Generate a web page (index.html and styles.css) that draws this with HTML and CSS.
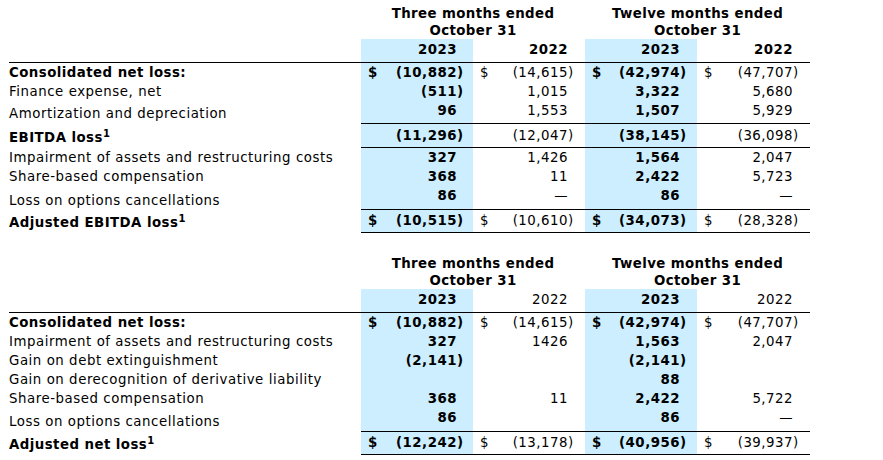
FILE: index.html
```html
<!DOCTYPE html>
<html lang="en">
<head>
<meta charset="utf-8">
<title>Reconciliation</title>
<link rel="stylesheet" href="styles.css">
</head>
<body>
<div class="page">
<table class="fin">
  <colgroup>
    <col class="c-label">
    <col class="c-d"><col class="c-n1"><col class="c-p1">
    <col class="c-d"><col class="c-n"><col class="c-p">
    <col class="c-d"><col class="c-n"><col class="c-p">
    <col class="c-d"><col class="c-n4"><col class="c-p">
  </colgroup>
  <thead>
    <tr class="r-period">
      <th></th>
      <th colspan="6" class="period">Three months ended<br>October 31</th>
      <th colspan="6" class="period">Twelve months ended<br>October 31</th>
    </tr>
    <tr class="r-year">
      <th></th>
      <th colspan="2" class="yr hl">2023</th><th class="hl"></th>
      <th colspan="2" class="yr b">2022</th><th></th>
      <th colspan="2" class="yr hl">2023</th><th class="hl"></th>
      <th colspan="2" class="yr b">2022</th><th></th>
    </tr>
  </thead>
  <tbody>
    <tr>
      <td class="lbl b">Consolidated net loss:</td>
      <td class="d hl">$</td><td class="n hl">(10,882</td><td class="p hl">)</td>
      <td class="d">$</td><td class="n">(14,615</td><td class="p">)</td>
      <td class="d hl">$</td><td class="n hl">(42,974</td><td class="p hl">)</td>
      <td class="d">$</td><td class="n">(47,707</td><td class="p">)</td>
    </tr>
    <tr>
      <td class="lbl">Finance expense, net</td>
      <td class="d hl"></td><td class="n hl">(511</td><td class="p hl">)</td>
      <td class="d"></td><td class="n">1,015</td><td class="p"></td>
      <td class="d hl"></td><td class="n hl">3,322</td><td class="p hl"></td>
      <td class="d"></td><td class="n">5,680</td><td class="p"></td>
    </tr>
    <tr class="rule h23 lo5">
      <td class="lbl">Amortization and depreciation</td>
      <td class="d hl"></td><td class="n hl">96</td><td class="p hl"></td>
      <td class="d"></td><td class="n">1,553</td><td class="p"></td>
      <td class="d hl"></td><td class="n hl">1,507</td><td class="p hl"></td>
      <td class="d"></td><td class="n">5,929</td><td class="p"></td>
    </tr>
    <tr class="rule h24 hi4 lo6">
      <td class="lbl b">EBITDA loss<sup>1</sup></td>
      <td class="d hl"></td><td class="n hl">(11,296</td><td class="p hl">)</td>
      <td class="d"></td><td class="n">(12,047</td><td class="p">)</td>
      <td class="d hl"></td><td class="n hl">(38,145</td><td class="p hl">)</td>
      <td class="d"></td><td class="n">(36,098</td><td class="p">)</td>
    </tr>
    <tr>
      <td class="lbl">Impairment of assets and restructuring costs</td>
      <td class="d hl"></td><td class="n hl">327</td><td class="p hl"></td>
      <td class="d"></td><td class="n">1,426</td><td class="p"></td>
      <td class="d hl"></td><td class="n hl">1,564</td><td class="p hl"></td>
      <td class="d"></td><td class="n">2,047</td><td class="p"></td>
    </tr>
    <tr>
      <td class="lbl">Share-based compensation</td>
      <td class="d hl"></td><td class="n hl">368</td><td class="p hl"></td>
      <td class="d"></td><td class="n">11</td><td class="p"></td>
      <td class="d hl"></td><td class="n hl">2,422</td><td class="p hl"></td>
      <td class="d"></td><td class="n">5,723</td><td class="p"></td>
    </tr>
    <tr class="rule h24 lo7">
      <td class="lbl">Loss on options cancellations</td>
      <td class="d hl"></td><td class="n hl">86</td><td class="p hl"></td>
      <td class="d"></td><td class="n">&mdash;</td><td class="p"></td>
      <td class="d hl"></td><td class="n hl">86</td><td class="p hl"></td>
      <td class="d"></td><td class="n">&mdash;</td><td class="p"></td>
    </tr>
    <tr class="rule h23 hi3 lo5">
      <td class="lbl b">Adjusted EBITDA loss<sup>1</sup></td>
      <td class="d hl">$</td><td class="n hl">(10,515</td><td class="p hl">)</td>
      <td class="d">$</td><td class="n">(10,610</td><td class="p">)</td>
      <td class="d hl">$</td><td class="n hl">(34,073</td><td class="p hl">)</td>
      <td class="d">$</td><td class="n">(28,328</td><td class="p">)</td>
    </tr>
  </tbody>
</table>

<table class="fin">
  <colgroup>
    <col class="c-label">
    <col class="c-d"><col class="c-n1"><col class="c-p1">
    <col class="c-d"><col class="c-n"><col class="c-p">
    <col class="c-d"><col class="c-n"><col class="c-p">
    <col class="c-d"><col class="c-n4"><col class="c-p">
  </colgroup>
  <thead>
    <tr class="r-period">
      <th></th>
      <th colspan="6" class="period">Three months ended<br>October 31</th>
      <th colspan="6" class="period">Twelve months ended<br>October 31</th>
    </tr>
    <tr class="r-year">
      <th></th>
      <th colspan="2" class="yr hl">2023</th><th class="hl"></th>
      <th colspan="2" class="yr">2022</th><th></th>
      <th colspan="2" class="yr hl">2023</th><th class="hl"></th>
      <th colspan="2" class="yr">2022</th><th></th>
    </tr>
  </thead>
  <tbody>
    <tr>
      <td class="lbl b">Consolidated net loss:</td>
      <td class="d hl">$</td><td class="n hl">(10,882</td><td class="p hl">)</td>
      <td class="d">$</td><td class="n">(14,615</td><td class="p">)</td>
      <td class="d hl">$</td><td class="n hl">(42,974</td><td class="p hl">)</td>
      <td class="d">$</td><td class="n">(47,707</td><td class="p">)</td>
    </tr>
    <tr>
      <td class="lbl">Impairment of assets and restructuring costs</td>
      <td class="d hl"></td><td class="n hl">327</td><td class="p hl"></td>
      <td class="d"></td><td class="n">1426</td><td class="p"></td>
      <td class="d hl"></td><td class="n hl">1,563</td><td class="p hl"></td>
      <td class="d"></td><td class="n">2,047</td><td class="p"></td>
    </tr>
    <tr>
      <td class="lbl">Gain on debt extinguishment</td>
      <td class="d hl"></td><td class="n hl">(2,141</td><td class="p hl">)</td>
      <td class="d"></td><td class="n"></td><td class="p"></td>
      <td class="d hl"></td><td class="n hl">(2,141</td><td class="p hl">)</td>
      <td class="d"></td><td class="n"></td><td class="p"></td>
    </tr>
    <tr>
      <td class="lbl">Gain on derecognition of derivative liability</td>
      <td class="d hl"></td><td class="n hl"></td><td class="p hl"></td>
      <td class="d"></td><td class="n"></td><td class="p"></td>
      <td class="d hl"></td><td class="n hl">88</td><td class="p hl"></td>
      <td class="d"></td><td class="n"></td><td class="p"></td>
    </tr>
    <tr>
      <td class="lbl">Share-based compensation</td>
      <td class="d hl"></td><td class="n hl">368</td><td class="p hl"></td>
      <td class="d"></td><td class="n">11</td><td class="p"></td>
      <td class="d hl"></td><td class="n hl">2,422</td><td class="p hl"></td>
      <td class="d"></td><td class="n">5,722</td><td class="p"></td>
    </tr>
    <tr class="rule h24 lo6">
      <td class="lbl">Loss on options cancellations</td>
      <td class="d hl"></td><td class="n hl">86</td><td class="p hl"></td>
      <td class="d"></td><td class="n"></td><td class="p"></td>
      <td class="d hl"></td><td class="n hl">86</td><td class="p hl"></td>
      <td class="d"></td><td class="n">&mdash;</td><td class="p"></td>
    </tr>
    <tr class="rule h23 hi3 lo5">
      <td class="lbl b">Adjusted net loss<sup>1</sup></td>
      <td class="d hl">$</td><td class="n hl">(12,242</td><td class="p hl">)</td>
      <td class="d">$</td><td class="n">(13,178</td><td class="p">)</td>
      <td class="d hl">$</td><td class="n hl">(40,956</td><td class="p hl">)</td>
      <td class="d">$</td><td class="n">(39,937</td><td class="p">)</td>
    </tr>
  </tbody>
</table>
</div>
</body>
</html>
```

FILE: styles.css
```css
html, body {
  margin: 0;
  padding: 0;
  background: #fff;
}

body {
  font-family: "DejaVu Sans", Verdana, sans-serif;
  font-size: 13.33px;
  color: #000;
}

.page {
  padding-left: 9px;
}

.fin {
  border-collapse: separate;
  border-spacing: 0;
  table-layout: fixed;
  width: 801px;
}

.fin + .fin {
  margin-top: 17px;
}

.c-label { width: 352px; }
.c-d { width: 18px; }
.c-n1 { width: 78px; }
.c-p1 { width: 16px; }
.c-n { width: 77px; }
.c-n4 { width: 78px; }
.c-p { width: 17px; }

.fin th,
.fin td {
  padding: 2px 0 0 0;
  vertical-align: top;
  line-height: 16px;
  white-space: nowrap;
  font-weight: normal;
  text-align: left;
  letter-spacing: 0.5px;
}

.fin .b { font-weight: bold; }

.fin .hl {
  background: #cceeff;
  font-weight: bold;
}

.fin td.lbl { letter-spacing: 0.55px; }
.fin td.lbl.b { letter-spacing: 0.45px; }

/* header rows */
.r-period { height: 39px; }
.fin th.period {
  padding-top: 5px;
  line-height: 17px;
  text-align: center;
  font-weight: bold;
  letter-spacing: 0.4px;
}

.r-year { height: 24px; }
.fin .r-year th {
  padding-top: 3px;
  border-bottom: 1px solid #000;
}
.fin th.yr { text-align: right; }

/* body rows */
.fin tbody tr { height: 19px; }
.fin tbody tr.h23 { height: 23px; }
.fin tbody tr.h24 { height: 24px; }

.hi3 td { padding-top: 3px; }
.hi4 td { padding-top: 4px; }
.lo5 td.lbl { padding-top: 5px; }
.lo6 td.lbl { padding-top: 6px; }
.lo7 td.lbl { padding-top: 7px; }

.rule td:not(.lbl) {
  border-bottom: 1px solid #000;
}

.fin td.d { padding-left: 7px; }
.fin td.n { text-align: right; }
.fin td.p { text-align: left; letter-spacing: 0; }

sup {
  font-size: 10px;
  line-height: 0;
  vertical-align: 5px;
  letter-spacing: 0;
}
```
